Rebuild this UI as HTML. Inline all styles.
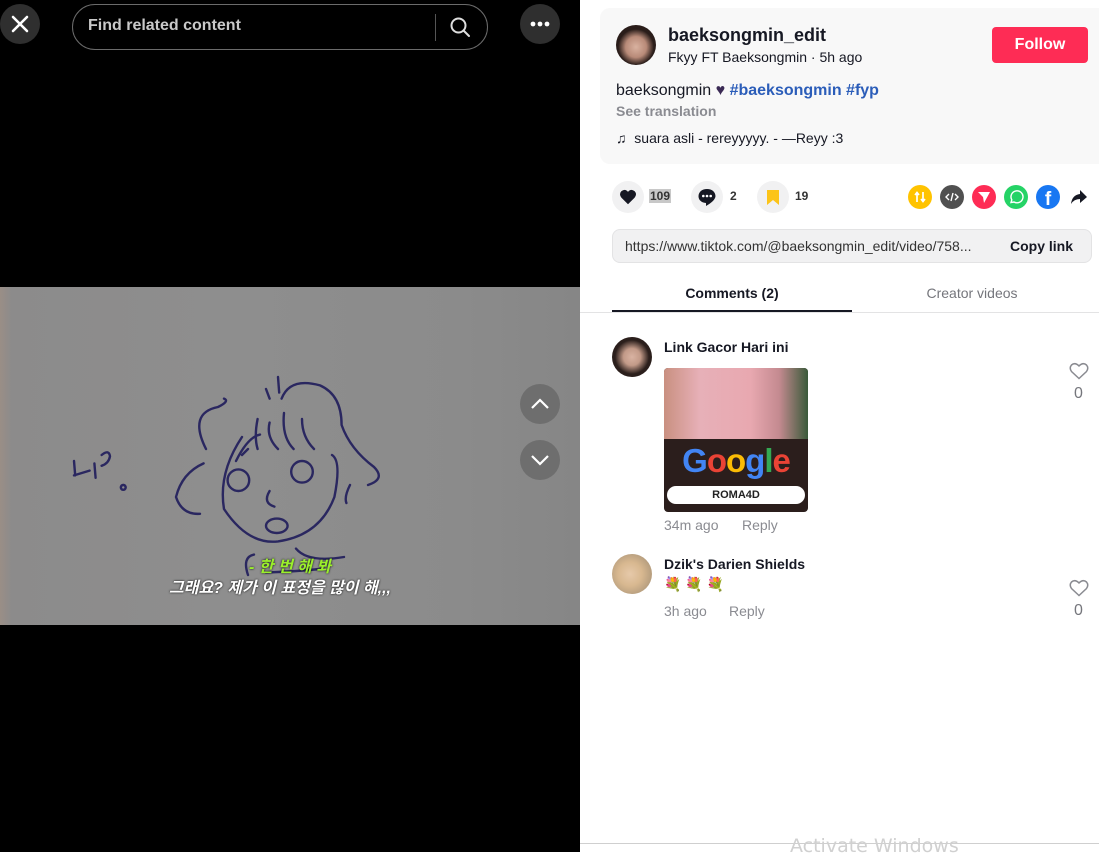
<!DOCTYPE html>
<html><head><meta charset="utf-8"><style>
*{margin:0;padding:0;box-sizing:border-box}
body{width:1099px;height:852px;overflow:hidden;background:#fff;font-family:"Liberation Sans","Noto Sans CJK KR",sans-serif;position:relative;color:#161823}
.abs{position:absolute}
.left{left:0;top:0;width:580px;height:852px;background:#000}
.circ{border-radius:50%;display:flex;align-items:center;justify-content:center}
.b{font-weight:bold}
</style></head><body>
<div class="abs left">
  <div class="abs circ" style="left:0;top:4px;width:40px;height:40px;background:#2f2f2f">
    <svg width="20" height="20" viewBox="0 0 20 20"><path d="M3 3L17 17M17 3L3 17" stroke="#fff" stroke-width="2.6" stroke-linecap="round"/></svg></div>
  <div class="abs" style="left:72px;top:4px;width:416px;height:46px;border:1px solid #6b6b6b;border-radius:23px"></div>
  <div class="abs b" style="left:88px;top:17px;font-size:16px;color:#c9c9c9">Find related content</div>
  <div class="abs" style="left:435px;top:14px;width:1px;height:27px;background:#555"></div>
  <svg class="abs" style="left:449px;top:16px" width="22" height="22" viewBox="0 0 22 22"><circle cx="9.5" cy="9.5" r="7" fill="none" stroke="#ddd" stroke-width="2"/><path d="M14.5 14.5L20 20" stroke="#ddd" stroke-width="2" stroke-linecap="round"/></svg>
  <div class="abs circ" style="left:520px;top:4px;width:40px;height:40px;background:#2f2f2f">
    <svg width="20" height="6"><circle cx="3" cy="3" r="2.4" fill="#fff"/><circle cx="10" cy="3" r="2.4" fill="#fff"/><circle cx="17" cy="3" r="2.4" fill="#fff"/></svg></div>
  <div class="abs" style="left:0;top:287px;width:580px;height:338px;background:linear-gradient(90deg,#9a8e86 0,#8c8b8b 2%,#8e8e8e 40%,#8b8b8b 80%,#868686 100%)">
    <svg class="abs" style="left:0;top:0" width="580" height="338" viewBox="0 0 580 338" fill="none" stroke="#2a2760" stroke-width="2" stroke-linecap="round">
      <g transform="translate(-40,-30) scale(1.2)">
      <path d="M95 170L96 182M95 182L108 178M112 172L113 184M118 165Q124 160 125 166Q124 172 118 174M136 190a2 2 0 1 0 .1 0"/>
      <path d="M205 160Q190 130 215 125Q225 120 220 118M255 110L258 118M265 100L266 113M268 118Q275 100 300 107Q318 115 318 140Q325 160 345 175Q355 185 340 190M203 172Q185 180 180 200Q185 215 200 214M325 190Q320 200 322 205"/>
      <path d="M235 150Q215 180 220 210Q240 240 265 237Q300 232 312 200Q318 170 310 165"/>
      <path d="M230 170Q240 150 250 148M235 165L240 160M248 135Q245 150 248 160M258 138Q255 150 265 160M270 130Q268 150 278 160M285 135Q285 150 295 160"/>
      <circle cx="232" cy="186" r="9"/><circle cx="285" cy="179" r="9"/><path d="M258 195Q252 205 262 208"/>
      <ellipse cx="264" cy="224" rx="9" ry="6"/>
      <path d="M245 248Q235 250 240 265M280 243Q290 255 320 250M255 263Q280 262 300 260"/>
      </g>
    </svg>
    <div class="abs b" style="left:0;width:580px;top:266px;text-align:center;font-size:16px;color:#9bef2c;font-style:italic;text-shadow:0 0 2px #000">- 한 번 해 봐</div>
    <div class="abs b" style="left:0;width:560px;top:287px;text-align:center;font-size:16px;color:#fff;font-style:italic;text-shadow:0 0 2px #000">그래요? 제가 이 표정을 많이 해,,,</div>
  </div>
  <div class="abs circ" style="left:520px;top:384px;width:40px;height:40px;background:#6e6e6e">
    <svg width="20" height="12"><path d="M2 10L10 2L18 10" stroke="#fff" stroke-width="2.2" fill="none"/></svg></div>
  <div class="abs circ" style="left:520px;top:440px;width:40px;height:40px;background:#6e6e6e">
    <svg width="20" height="12"><path d="M2 2L10 10L18 2" stroke="#fff" stroke-width="2.2" fill="none"/></svg></div>
</div>

<div class="abs" style="left:600px;top:8px;width:499px;height:156px;background:#f8f8f8;border-radius:10px 0 0 10px"></div>
<div class="abs circ" style="left:616px;top:25px;width:40px;height:40px;background:radial-gradient(circle at 50% 55%,#d9b2a0 0,#b88a78 35%,#2a1d1a 60%)"></div>
<div class="abs b" style="left:668px;top:25px;font-size:18px">baeksongmin_edit</div>
<div class="abs" style="left:668px;top:49px;font-size:14px">Fkyy FT Baeksongmin · 5h ago</div>
<div class="abs circ b" style="left:992px;top:27px;width:96px;height:36px;border-radius:4px;background:#fe2c55;color:#fff;font-size:16px">Follow</div>
<div class="abs" style="left:616px;top:82px;font-size:16px">baeksongmin <span style="color:#3b2a55">♥</span>  <span class="b" style="color:#2b5db9;font-weight:600">#baeksongmin #fyp</span></div>
<div class="abs b" style="left:616px;top:103px;font-size:14px;color:#8a8b91">See translation</div>
<div class="abs" style="left:616px;top:130px;font-size:14px">♫ &nbsp;suara asli - rereyyyyy. - —Reyy :3</div>

<div class="abs circ" style="left:612px;top:181px;width:32px;height:32px;background:#f1f1f2"><svg width="18" height="16" viewBox="0 0 24 22"><path d="M12 21L3 12Q-1 7 3 3Q8-1 12 4Q16-1 21 3Q25 7 21 12Z" fill="#161823"/></svg></div>
<div class="abs b" style="left:649px;top:189px;font-size:12px;background:#c8c8c8;color:#333;padding:0 1px">109</div>
<div class="abs circ" style="left:691px;top:181px;width:32px;height:32px;background:#f1f1f2"><svg width="20" height="20" viewBox="0 0 20 20"><path d="M10 2C5 2 1.5 5 1.5 9.3C1.5 13 4.5 15.8 9 16L9 19Q18 14 18.5 9.3C18.5 5 15 2 10 2Z" fill="#161823"/><circle cx="6.3" cy="9" r="1.3" fill="#fff"/><circle cx="10" cy="9" r="1.3" fill="#fff"/><circle cx="13.7" cy="9" r="1.3" fill="#fff"/></svg></div>
<div class="abs b" style="left:730px;top:189px;font-size:12px;color:#333">2</div>
<div class="abs circ" style="left:757px;top:181px;width:32px;height:32px;background:#f1f1f2"><svg width="14" height="17" viewBox="0 0 14 17"><path d="M1 1H13V16L7 11L1 16Z" fill="#fcc419"/></svg></div>
<div class="abs b" style="left:795px;top:189px;font-size:12px;color:#333">19</div>

<div class="abs circ" style="left:908px;top:185px;width:24px;height:24px;background:#ffc300"><svg width="14" height="14" viewBox="0 0 14 14" fill="none" stroke="#fff" stroke-width="1.7"><path d="M4 12V3M2 5L4 2.5L6 5M10 2V11M8 9L10 11.5L12 9"/></svg></div>
<div class="abs circ" style="left:940px;top:185px;width:24px;height:24px;background:#505050"><svg width="14" height="10" viewBox="0 0 14 10" fill="none" stroke="#fff" stroke-width="1.4"><path d="M4 2L1 5L4 8M10 2L13 5L10 8M8 1L6 9"/></svg></div>
<div class="abs circ" style="left:972px;top:185px;width:24px;height:24px;background:#fe2c55"><svg width="14" height="14" viewBox="0 0 14 14"><path d="M1 2L13 2L7 13L6 7Z" fill="#fff"/></svg></div>
<div class="abs circ" style="left:1004px;top:185px;width:24px;height:24px;background:#25d366"><svg width="16" height="16" viewBox="0 0 16 16" fill="none" stroke="#fff" stroke-width="1.4"><path d="M3 13.5L3.8 10.8A6 6 0 1 1 6 13Z"/></svg></div>
<div class="abs circ" style="left:1036px;top:185px;width:24px;height:24px;background:#1877f2;color:#fff;font-weight:bold;font-size:19px;line-height:24px;padding-top:5px">f</div>
<svg class="abs" style="left:1070px;top:188px" width="18" height="18" viewBox="0 0 18 18"><path d="M10 2L17 9L10 15V11Q4 11 1 16Q2 7 10 6Z" fill="#161823"/></svg>

<div class="abs" style="left:612px;top:229px;width:480px;height:34px;background:#f1f1f2;border:1px solid #e3e3e4;border-radius:8px"></div>
<div class="abs" style="left:625px;top:238px;font-size:14px;color:#333">https://www.tiktok.com/@baeksongmin_edit/video/758...</div>
<div class="abs b" style="left:1010px;top:238px;font-size:14px">Copy link</div>

<div class="abs b" style="left:612px;width:240px;top:285px;text-align:center;font-size:14px">Comments (2)</div>
<div class="abs" style="left:852px;width:240px;top:285px;text-align:center;font-size:14px;color:#75767c">Creator videos</div>
<div class="abs" style="left:580px;top:312px;width:519px;height:1px;background:#e3e3e4"></div>
<div class="abs" style="left:612px;top:310px;width:240px;height:2px;background:#161823"></div>

<div class="abs circ" style="left:612px;top:337px;width:40px;height:40px;background:radial-gradient(circle at 50% 50%,#d9b3a2 0,#c29a88 30%,#2b1f1c 60%)"></div>
<div class="abs b" style="left:664px;top:339px;font-size:14px">Link Gacor Hari ini</div>
<div class="abs" style="left:664px;top:368px;width:144px;height:144px;border-radius:4px;overflow:hidden;background:#2b1e1c">
  <div class="abs" style="left:0;top:0;width:144px;height:71px;background:linear-gradient(90deg,#c99080 0,#e7b0b8 25%,#e8a8b0 60%,#c48a90 80%,#3a5a3a 100%)"></div>
  <div class="abs b" style="left:0;width:144px;top:74px;text-align:center;font-size:33px;letter-spacing:-1px;font-family:'Liberation Sans',sans-serif"><span style="color:#4285f4">G</span><span style="color:#ea4335">o</span><span style="color:#fbbc05">o</span><span style="color:#4285f4">g</span><span style="color:#34a853">l</span><span style="color:#ea4335">e</span></div>
  <div class="abs b" style="left:3px;top:118px;width:138px;height:18px;background:#fff;border-radius:9px;font-size:11px;text-align:center;line-height:18px;color:#222">ROMA4D</div>
</div>
<div class="abs" style="left:664px;top:517px;font-size:14px;color:#8a8b91">34m ago</div>
<div class="abs" style="left:742px;top:517px;font-size:14px;color:#8a8b91">Reply</div>
<svg class="abs" style="left:1069px;top:362px" width="20" height="18" viewBox="0 0 20 18"><path d="M10 16.5L2.5 9.5Q0 6 2.5 3Q6 0 10 4Q14 0 17.5 3Q20 6 17.5 9.5Z" fill="none" stroke="#8a8b91" stroke-width="1.5"/></svg>
<div class="abs" style="left:1074px;top:385px;font-size:16px;color:#75767c">0</div>

<div class="abs circ" style="left:612px;top:554px;width:40px;height:40px;background:radial-gradient(circle at 45% 50%,#e6c9aa 0,#d8b890 40%,#b9a080 70%)"></div>
<div class="abs b" style="left:664px;top:556px;font-size:14px">Dzik's Darien Shields</div>
<div class="abs" style="left:664px;top:576px;font-size:14px">💐 💐 💐</div>
<div class="abs" style="left:664px;top:603px;font-size:14px;color:#8a8b91">3h ago</div>
<div class="abs" style="left:729px;top:603px;font-size:14px;color:#8a8b91">Reply</div>
<svg class="abs" style="left:1069px;top:579px" width="20" height="18" viewBox="0 0 20 18"><path d="M10 16.5L2.5 9.5Q0 6 2.5 3Q6 0 10 4Q14 0 17.5 3Q20 6 17.5 9.5Z" fill="none" stroke="#8a8b91" stroke-width="1.5"/></svg>
<div class="abs" style="left:1074px;top:602px;font-size:16px;color:#75767c">0</div>

<div class="abs" style="left:580px;top:843px;width:519px;height:1px;background:#cfcfcf"></div>
<div class="abs" style="left:790px;top:835px;font-size:19px;color:#d0d0d0;font-family:'DejaVu Sans',sans-serif">Activate Windows</div>
</body></html>
